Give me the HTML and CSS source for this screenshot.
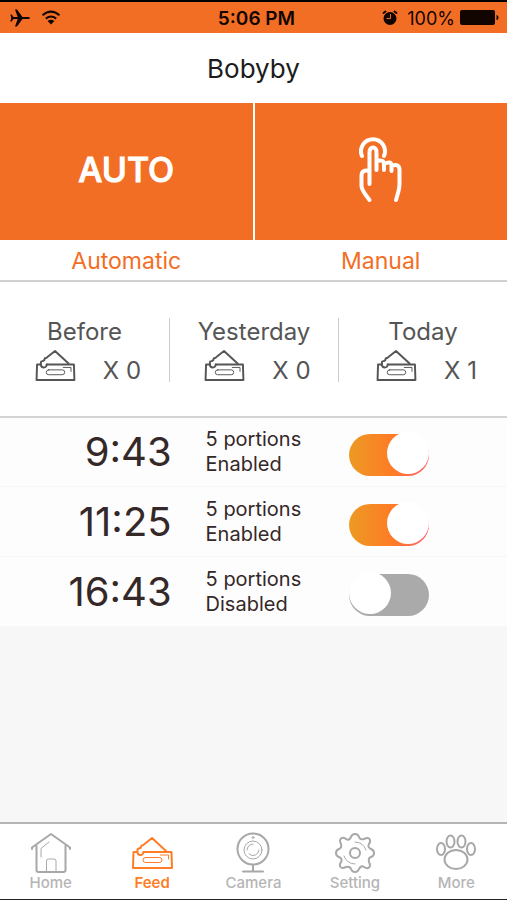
FILE: index.html
```html
<!DOCTYPE html>
<html lang="en">
<head>
<meta charset="UTF-8">
<meta name="viewport" content="width=device-width, initial-scale=1">
<title>Bobyby</title>
<link rel="stylesheet" href="styles.css">
</head>
<body>
   <svg class="symbols" aria-hidden="true">
      <symbol id="feeder" viewBox="0 0 42 34">
         <path d="M6 16H2.500L2 32H41L40.500 16H12.500" />
         <path d="M12.500 16A3 3 0 1 1 6.500 16V13.500Q6.500 12.500 8 12.500Q10.500 12 10.500 9.500Q12.500 9.500 13.500 8L21 2L35 15" />
         <rect class="thin" x="12" y="21.500" width="19" height="5" rx="2.500" />
         <path class="thin" d="M29.500 19H37.500V23" />
      </symbol>
   </svg>

   <div class="status-bar">
      <div class="status-left">
         <svg class="plane" viewBox="0 0 20 18"><path d="M20 9Q20 7.900 18 7.900H12.500L7 .500H5L7.700 7.900H3.500L1.700 5.500H.300L1.300 9L.300 12.500H1.700L3.500 10.100H7.700L5 17.500H7L12.500 10.100H18Q20 10.100 20 9Z" /></svg>
         <svg class="wifi" viewBox="0 0 20 15"><path d="M1.500 5.200Q10-2 18.500 5.200M4.800 8.600Q10 4.400 15.200 8.600" /><path class="fill" d="M10 14.500L6.600 11Q10 8.300 13.400 11Z" /></svg>
      </div>
      <div class="status-time">5:06 PM</div>
      <div class="status-right">
         <svg class="alarm" viewBox="0 0 16 16"><circle cx="8" cy="8.500" r="6.500" /><path class="bells" d="M1.500 3L3.500 1.500M14.500 3L12.500 1.500" /><path class="hands" d="M8.500 4.500V8.500H5" /></svg>
         <span class="percent">100%</span>
         <svg class="battery" viewBox="0 0 39 15"><rect x="0" y="0" width="35" height="15" rx="2" /><path d="M36.500 5Q38.500 5 38.500 7.500T36.500 10Z" /></svg>
      </div>
   </div>

   <header class="header">
      <h1>Bobyby</h1>
   </header>

   <div class="modes">
      <button type="button" class="mode">
         <span class="mode-panel"><span class="auto" aria-hidden="true">AUTO</span></span>
         <span class="mode-label">Automatic</span>
      </button>
      <button type="button" class="mode">
         <span class="mode-panel">
            <svg class="hand" viewBox="0 0 44 66">
               <path d="M3 19A12 12 0 1 1 25 19" />
               <path d="M10.500 47V16Q10.500 10.500 14 10.500T17.500 16V33M17.500 24Q25 22 25 27V33M25 27Q32.500 23 32.500 29V34M32.500 29Q40.500 26 40.500 33V47Q40.500 52 37 63M10.500 34Q2.500 32 2.500 39V49Q2.500 53 10.500 63" />
            </svg>
         </span>
         <span class="mode-label">Manual</span>
      </button>
   </div>

   <div class="stats">
      <div class="stat">
         <h2>Before</h2>
         <div class="count"><svg class="icon"><use href="#feeder" /></svg><span>X 0</span></div>
      </div>
      <div class="stat">
         <h2>Yesterday</h2>
         <div class="count"><svg class="icon"><use href="#feeder" /></svg><span>X 0</span></div>
      </div>
      <div class="stat">
         <h2>Today</h2>
         <div class="count"><svg class="icon"><use href="#feeder" /></svg><span>X 1</span></div>
      </div>
   </div>

   <main class="schedule">
      <div class="meal">
         <span class="time">9:43</span>
         <label for="meal1">5 portions<br>Enabled</label>
         <input type="checkbox" role="switch" class="switch" id="meal1" checked>
      </div>
      <div class="meal">
         <span class="time">11:25</span>
         <label for="meal2">5 portions<br>Enabled</label>
         <input type="checkbox" role="switch" class="switch" id="meal2" checked>
      </div>
      <div class="meal">
         <span class="time">16:43</span>
         <label for="meal3">5 portions<br>Disabled</label>
         <input type="checkbox" role="switch" class="switch" id="meal3">
      </div>
   </main>

   <nav class="tabs">
      <a href="#home">
         <svg class="tab-icon" viewBox="0 0 42 42"><path d="M2 17V15.500L21 2L40 15.500V17M6.500 14V38Q6.500 40 8.500 40H33.500Q35.500 40 35.500 38V14" /><path class="thin" d="M16.500 40V29Q16.500 27 18.500 27H24Q26 27 26 29V40M19 10L11 16.500V25" /></svg>
         Home
      </a>
      <a href="#feed" class="active">
         <svg class="tab-icon" viewBox="0 -4 42 42"><use href="#feeder" width="42" height="34" /></svg>
         Feed
      </a>
      <a href="#camera">
         <svg class="tab-icon" viewBox="0 0 42 42"><circle cx="21" cy="17" r="15.500" /><circle class="thin" cx="21" cy="18" r="9" /><path class="thin" d="M15 18A6 6 0 0 1 21 12M27 18A6 6 0 0 1 17 22" /><circle class="thin" cx="21" cy="5.500" r="1" /><path d="M21 33V39M11 39.500H31" /></svg>
         Camera
      </a>
      <a href="#setting">
         <svg class="tab-icon" viewBox="0 0 42 42"><path d="M21 2Q24 2 25 5T30 7Q34 5 35.500 7T35 12T37 17Q40 18 40 21T37 25T35 30Q37 34 35 35.500T30 35T25 37Q24 40 21 40T17 37T12 35Q8 37 6.500 35T7 30T5 25Q2 24 2 21T5 17T7 12Q5 8 7 6.500T12 7T17 5Q18 2 21 2Z" /><circle cx="21" cy="21" r="5" /><path class="thin" d="M21 10Q29 10 32 18M10 24Q13 32 21 32" /></svg>
         Setting
      </a>
      <a href="#more">
         <svg class="tab-icon" viewBox="0 1 42 42"><ellipse cx="21" cy="28.500" rx="11.500" ry="9.500" /><ellipse cx="15.500" cy="10.500" rx="4" ry="6" /><ellipse cx="26.500" cy="10.500" rx="4" ry="6" /><ellipse cx="6" cy="18" rx="4" ry="6" /><ellipse cx="36" cy="18" rx="4" ry="6" /></svg>
         More
      </a>
   </nav>
</body>
</html>
```
FILE: styles.css
```css
* {
  box-sizing: border-box;
}
body {
  margin: 0;
  min-height: 100vh;
  display: flex;
  flex-direction: column;
  font-family: Inter, "Liberation Sans", sans-serif;
  background-color: #f7f7f7;
  border-top: 2px solid #000;
  border-bottom: 1px solid #222;
}
svg {
  fill: none;
  stroke: currentColor;
  stroke-width: 2;
  stroke-linecap: round;
  stroke-linejoin: round;
}
.thin {
  stroke-width: 1;
}
.symbols {
  display: none;
}

.status-bar {
  display: grid;
  grid-template-columns: 1fr auto 1fr;
  align-items: center;
  height: 31px;
  padding: 0 8px 0 10px;
  background-color: #f36e25;
  color: #120500;
  font-size: 18px;
}
.status-left, .status-right {
  display: flex;
  align-items: center;
}
.status-left {
  gap: 11px;
}
.status-right {
  justify-content: flex-end;
}
.status-time {
  padding: 1px 0 0 4px;
  font-size: 19px;
  font-weight: 600;
}
.percent {
  padding: 1px 5px 0 9px;
}
.plane, .alarm, .battery {
  fill: currentColor;
  stroke: none;
}
.plane {
  width: 20px;
  height: 18px;
}
.wifi {
  width: 20px;
  height: 15px;
  stroke-linecap: butt;
}
.wifi .fill {
  fill: currentColor;
  stroke: none;
}
.alarm {
  width: 16px;
  height: 16px;
}
.alarm .bells {
  stroke: currentColor;
}
.alarm .hands {
  fill: none;
  stroke: #f36e25;
  stroke-width: 1;
}
.battery {
  width: 39px;
  height: 15px;
}

.header {
  padding: 21px 0 19px;
  background-color: #fff;
  text-align: center;
}
.header h1 {
  margin: 0;
  font-size: 26px;
  line-height: 30px;
  font-weight: 400;
  color: #1c1c1c;
}

.modes {
  display: grid;
  grid-template-columns: 1fr 1fr;
  column-gap: 2px;
  background-color: #fff;
  border-bottom: 2px solid #d0d0d0;
}
.mode {
  padding: 0;
  border: none;
  background: none;
  font: inherit;
  color: #f36e25;
  cursor: pointer;
}
.mode-panel {
  display: flex;
  justify-content: center;
  align-items: center;
  height: 137px;
  padding-bottom: 4px;
  background-color: #f36e25;
  color: #fff;
}
.mode-label {
  display: block;
  padding: 6px 0 4px;
  font-size: 23px;
  line-height: 30px;
}
.auto {
  font-size: 34px;
  font-weight: 500;
  -webkit-text-stroke: 1px #fff;
  stroke-linejoin: round;
}
.hand {
  width: 44px;
  height: 66px;
  stroke-width: 4;
}

.stats {
  display: grid;
  grid-template-columns: 1fr 1fr 1fr;
  padding: 36px 0 34px;
  background-color: #fff;
  border-bottom: 2px solid #d4d4d4;
  color: #555;
  font-size: 24px;
}
.stat {
  text-align: center;
}
.stat + .stat {
  border-left: 1px solid #ccc;
}
.stat h2 {
  margin: 0;
  font-size: 24px;
  line-height: 28px;
  font-weight: 400;
}
.count {
  display: flex;
  justify-content: center;
  align-items: flex-end;
  gap: 27px;
  padding: 3px 0 0 6px;
  line-height: 22px;
}
.icon {
  width: 42px;
  height: 33px;
}

.schedule {
  flex: 1;
}
.meal {
  display: grid;
  grid-template-columns: 40% 1fr 80px;
  column-gap: 34px;
  align-items: center;
  padding: 9px 78px 9px 0;
  background-color: #fdfdfd;
  color: #352828;
}
.meal + .meal {
  padding-top: 10px;
  border-top: 1px solid #f7f7f7;
}
.time {
  font-size: 40px;
  line-height: 50px;
  text-align: right;
}
.meal label {
  font-size: 20px;
  line-height: 25px;
}
.switch {
  appearance: none;
  position: relative;
  width: 80px;
  height: 42px;
  margin: 6px 0 0;
  border-radius: 21px;
  background-color: #aaa;
  cursor: pointer;
}
.switch::before {
  content: "";
  position: absolute;
  top: -2px;
  left: 0;
  width: 42px;
  height: 42px;
  border-radius: 50%;
  background-color: #fff;
}
.switch:checked {
  background: linear-gradient(to right, #ec9a24, #ff7b25 55%, #ff6070);
}
.switch:checked::before {
  left: 38px;
}

.tabs {
  display: grid;
  grid-template-columns: repeat(5, 1fr);
  padding: 8px 0 7px;
  background-color: #fff;
  border-top: 2px solid #b5b5b5;
}
.tabs a {
  display: flex;
  flex-direction: column;
  align-items: center;
  font-size: 15px;
  line-height: 18px;
  font-weight: 500;
  color: #b5b5b5;
  text-decoration: none;
}
.tabs .active {
  color: #ff7d26;
  font-weight: 600;
}
.tab-icon {
  width: 42px;
  height: 42px;
  color: #a8a8a8;
}
.active .tab-icon {
  color: #ff7d26;
}
```
